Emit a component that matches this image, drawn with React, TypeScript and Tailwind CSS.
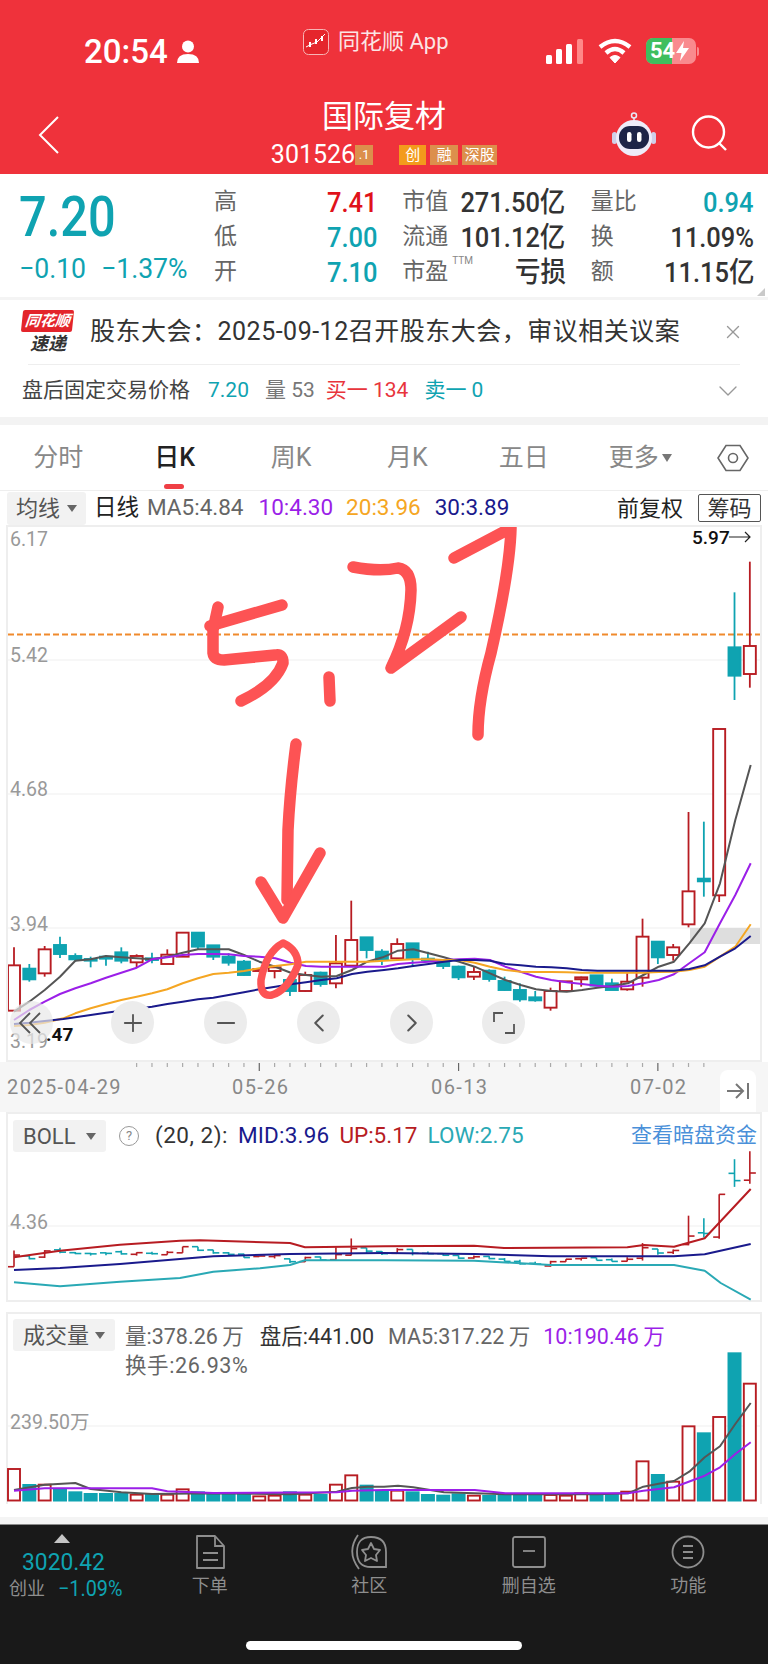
import { ChevronDown, ChevronLeft, ChevronRight, Minus, Plus, X } from "lucide-react"

const RED = "#b71c22"
const TEAL = "#0fa3b1"

// kind, wick top, wick bottom, body top, body bottom: measured in 3x crop units, y = 820 + v / 3
const candles: [string, number, number, number, number][] = [
  ["r", 382, 572, 436, 572], ["t", 432, 485, 446, 478], ["r", 378, 470, 388, 460], ["t", 350, 414, 375, 402],
  ["t", 400, 425, 408, 418], ["t", 410, 442, 417, 422], ["t", 405, 437, 410, 416], ["t", 382, 430, 397, 422],
  ["r", 403, 442, 408, 427], ["t", 398, 430, 415, 420], ["r", 388, 432, 404, 432], ["r", 338, 410, 338, 410],
  ["t", 338, 388, 338, 380], ["t", 375, 420, 376, 410], ["t", 400, 437, 410, 428], ["t", 420, 467, 425, 465],
  ["r", 447, 453, 447, 453], ["r", 435, 475, 442, 453], ["t", 478, 528, 480, 513], ["r", 455, 515, 465, 513],
  ["t", 455, 500, 458, 492], ["r", 345, 505, 430, 490], ["r", 242, 440, 360, 437], ["t", 352, 415, 352, 390],
  ["t", 388, 435, 395, 420], ["r", 355, 418, 372, 415], ["t", 370, 440, 370, 415], ["t", 395, 420, 416, 420],
  ["t", 420, 447, 420, 438], ["t", 437, 480, 440, 472], ["r", 440, 480, 456, 470], ["t", 448, 485, 452, 477],
  ["t", 470, 512, 483, 510], ["t", 490, 545, 510, 538], ["t", 513, 545, 532, 541], ["r", 503, 572, 513, 563],
  ["r", 484, 513, 484, 513], ["r", 470, 500, 472, 478], ["t", 466, 497, 466, 497], ["t", 476, 510, 490, 510],
  ["r", 460, 512, 485, 508], ["r", 296, 500, 350, 473], ["t", 365, 432, 365, 412], ["r", 372, 422, 382, 405],
  ["r", -24, 322, 214, 313], ["t", 5, 230, 176, 184], ["r", -273, 246, -273, 226], ["t", -683, -360, -518, -433],
  ["r", -775, -397, -522, -438],
]

const ma5 = "42,575 88,545 134,510 180,470 226,422 272,418 318,408 364,412 410,415 456,418 502,410 548,398 594,388 640,388 686,388 732,405 778,425 826,440 872,458 918,465 964,470 1010,468 1056,450 1102,425 1148,412 1194,392 1240,388 1286,400 1332,412 1378,425 1424,440 1470,460 1516,480 1562,495 1608,508 1654,513 1700,515 1746,510 1792,503 1838,498 1884,490 1930,465 1976,440 2022,425 2068,370 2114,310 2160,190 2206,0 2252,-165"
const ma10 = "42,600 88,570 134,545 180,522 226,505 272,490 318,473 364,458 410,443 456,418 502,412 548,405 594,402 640,402 686,403 732,408 778,410 826,415 872,428 918,438 964,440 1010,440 1056,440 1102,440 1152,440 1194,432 1240,428 1286,425 1332,420 1378,418 1424,416 1470,420 1516,440 1562,455 1608,470 1654,480 1700,487 1746,492 1792,497 1838,500 1884,498 1930,490 1976,480 2022,463 2068,430 2114,397 2160,310 2206,225 2252,130"
const ma20 = "42,618 88,615 134,608 190,595 226,580 272,565 318,552 364,540 410,530 456,520 502,508 548,490 594,475 640,462 686,458 732,453 778,445 826,438 872,433 918,425 964,425 1010,425 1056,425 1102,425 1152,422 1194,420 1240,418 1286,418 1332,420 1378,420 1424,428 1470,440 1516,450 1562,455 1608,456 1654,456 1700,457 1746,458 1792,458 1838,458 1884,458 1930,458 1976,456 2022,455 2068,450 2114,440 2160,410 2206,380 2252,313"
const ma30 = "42,612 88,608 134,603 190,597 226,592 272,585 318,578 364,572 410,566 456,560 502,552 548,545 594,538 640,533 686,525 732,517 778,508 826,500 872,493 918,487 964,480 1010,475 1056,462 1102,455 1152,450 1194,445 1240,438 1286,432 1332,425 1378,420 1424,420 1470,422 1516,432 1562,436 1608,440 1654,442 1700,445 1746,450 1792,452 1838,452 1884,452 1930,452 1976,452 2022,452 2068,447 2114,436 2160,410 2206,385 2252,348"

const bollUp = "42,475 180,455 360,437 540,425 600,424 870,432 915,445 1152,442 1422,440 1512,447 1882,445 1932,438 2022,443 2114,418 2252,270"
const bollMid = "42,513 180,507 360,495 540,480 640,472 870,465 1152,462 1422,465 1652,472 2022,472 2114,466 2252,435"
const bollLow = "42,550 180,562 360,548 540,537 640,518 780,508 870,498 915,484 1152,484 1422,485 1652,498 2022,498 2114,515 2162,552 2252,602"

const volTops = [480, 525, 527, 537, 547, 552, 552, 552, 557, 555, 557, 541, 547, 552, 555, 555, 562, 560, 547, 557, 555, 527, 499, 527, 545, 545, 547, 555, 557, 553, 560, 558, 558, 558, 558, 558, 560, 553, 552, 552, 548, 457, 495, 518, 352, 370, 324, 130, 224]
const volMa5 = "42,543 134,527 226,522 272,540 364,550 456,555 640,553 870,556 1010,548 1056,537 1102,533 1152,533 1194,530 1240,535 1332,550 1424,553 1516,556 1792,556 1884,553 1930,533 1976,524 2022,516 2068,488 2114,445 2160,412 2206,345 2252,282"
const volMa10 = "42,545 134,538 456,538 502,547 640,552 1010,550 1056,545 1152,543 1424,543 1516,553 1884,553 1930,545 2022,535 2114,500 2160,475 2206,435 2252,400"

const candleX = (i: number) => 14 + 15.33 * i
const mainY = (v: number) => 820 + v / 3

// crop units to page px
const pts = (s: string, y0: number) =>
  s.split(" ").map((p) => {
    const [x, y] = p.split(",").map(Number)
    return `${(x / 3).toFixed(1)},${(y0 + y / 3).toFixed(1)}`
  }).join(" ")

const bollY = (y: number) => 1238 + (y - 895) * 0.257

function Line({ points, color, width = 2 }: { points: string; color: string; width?: number }) {
  return <polyline points={points} fill="none" stroke={color} strokeWidth={width} strokeLinejoin="round" />
}

function MainChart() {
  return (
    <svg viewBox="8 527 752 533" width={752} height={533} className="block" fontFamily="Roboto, sans-serif">
      <line x1="8" x2="760" y1="660" y2="660" stroke="#efefef" />
      <line x1="8" x2="760" y1="794" y2="794" stroke="#efefef" />
      <line x1="8" x2="760" y1="928" y2="928" stroke="#efefef" />
      <rect x="690" y="928" width="70" height="16" fill="#dedede" />
      <line x1="8" x2="760" y1="634.5" y2="634.5" stroke="#f08a2c" strokeWidth="1.8" strokeDasharray="6 3" />
      <text x="10" y="546" fontSize="19.5" fill="#999">6.17</text>
      <text x="10" y="662" fontSize="19.5" fill="#999">5.42</text>
      <text x="10" y="796" fontSize="19.5" fill="#999">4.68</text>
      <text x="10" y="931" fontSize="19.5" fill="#999">3.94</text>
      <text x="10" y="1048" fontSize="19.5" fill="#999">3.19</text>
      <text x="692" y="544" fontSize="19" fontWeight="500" fill="#111">5.97</text>
      <path d="M729 537 H750 M745 532 L750 537 L745 542" fill="none" stroke="#222" strokeWidth="1.2" />
      {candles.map(([k, wt, wb, bt, bb], i) => {
        const c = k === "r" ? RED : TEAL
        const x = candleX(i)
        return (
          <g key={i}>
            <line x1={x} x2={x} y1={mainY(wt)} y2={mainY(wb)} stroke={c} strokeWidth="1.8" />
            <rect
              x={x - 6}
              y={mainY(bt)}
              width={12}
              height={Math.max(mainY(bb) - mainY(bt), 1.5)}
              fill={k === "r" ? "#fff" : c}
              stroke={c}
              strokeWidth="1.9"
            />
          </g>
        )
      })}
      <Line points={pts(ma5, 820)} color="#555" />
      <Line points={pts(ma10, 820)} color="#9b1fe8" />
      <Line points={pts(ma20, 820)} color="#f5a623" />
      <Line points={pts(ma30, 820)} color="#1a1a8c" />
      {/* hand written note on top of the chart */}
      <g fill="none" stroke="#fd5354" strokeWidth="11.5" strokeLinecap="round" strokeLinejoin="round">
        <path d="M282 605 L220 623 L210 626" />
        <path d="M218 607 L213 630 L213 653 Q214 660 224 660 L275 655 Q283 653 283 663 Q275 685 241 701" />
        <path d="M329 677 L330 701" />
        <path d="M296 744 Q290 790 288 830 L287 900" />
        <path d="M261 882 L283 918 L320 853" />
        <path d="M283 943 Q266 952 261 980 Q260 997 272 995 Q288 990 298 965 Q298 950 283 943 Z" strokeWidth="7.5" />
        <path d="M353 567 Q380 572 398 568 Q411 570 411 590 Q410 630 391 668 L461 617" />
        <path d="M454 558 L511 528 Q510 570 491 653 Q478 700 478 735" />
      </g>
    </svg>
  )
}

function BollChart() {
  return (
    <svg viewBox="8 1159 752 140" width={752} height={140} className="block overflow-visible" fontFamily="Roboto, sans-serif">
      <line x1="8" x2="760" y1="1227" y2="1227" stroke="#efefef" />
      <text x="10" y="1230" fontSize="19.5" fill="#999">4.36</text>
      {candles.map(([k, wt, wb, bt, bb], i) => {
        const c = k === "r" ? RED : TEAL
        const x = candleX(i)
        const top = bollY(mainY(bt))
        const bot = bollY(mainY(bb))
        const open = k === "r" ? bot : top
        const close = k === "r" ? top : bot
        return (
          <g key={i} stroke={c} strokeWidth="1.6">
            <line x1={x} x2={x} y1={bollY(mainY(wt))} y2={bollY(mainY(wb))} />
            <line x1={x - 6} x2={x} y1={open} y2={open} />
            <line x1={x} x2={x + 6} y1={close} y2={close} />
          </g>
        )
      })}
      <Line points={pts(bollUp, 1100)} color={RED} />
      <Line points={pts(bollMid, 1100)} color="#1a1a8c" />
      <Line points={pts(bollLow, 1100)} color="#2aa9b5" />
    </svg>
  )
}

function VolChart() {
  return (
    <svg viewBox="8 1395 752 108" width={752} height={108} className="block overflow-visible" fontFamily="Roboto, 'Noto Sans CJK SC', sans-serif">
      <line x1="8" x2="760" y1="1427" y2="1427" stroke="#efefef" />
      <text x="10" y="1430" fontSize="19.5" fill="#999">239.50万</text>
      {volTops.map((t, i) => {
        const y = 1310 + t / 3
        const up = candles[i][0] === "r"
        return up ? (
          <rect key={i} x={candleX(i) - 6} y={y} width={12} height={1501.5 - y} fill="#fff" stroke={RED} strokeWidth="1.9" />
        ) : (
          <rect key={i} x={candleX(i) - 7} y={y} width={14} height={1502.5 - y} fill={TEAL} />
        )
      })}
      <Line points={pts(volMa5, 1310)} color="#555" />
      <Line points={pts(volMa10, 1310)} color="#9b1fe8" />
    </svg>
  )
}

function Narrow({ children, className = "" }: { children: React.ReactNode; className?: string }) {
  return <span className={`inline-block origin-right scale-x-[0.91] whitespace-nowrap ${className}`}>{children}</span>
}

function Cell({ label, value, color, sup }: { label: string; value: string; color: string; sup?: boolean }) {
  return (
    <div className="flex h-[35px] items-center justify-between">
      <span className="relative text-[23px] text-[#666]">
        {label}
        {sup && <span className="absolute left-[50px] top-[-2px] text-[10px] text-[#888]">TTM</span>}
      </span>
      <Narrow className={`text-[28px] font-medium ${color}`}>{value}</Narrow>
    </div>
  )
}

function RoundButton({ children, left, faded }: { children: React.ReactNode; left: string; faded?: boolean }) {
  return (
    <div className={`absolute top-[474px] flex h-[43px] w-[43px] items-center justify-center rounded-full ${left} ${faded ? "bg-[#e8e8e8]/70" : "bg-[#ececec]"}`}>
      {children}
    </div>
  )
}

function Chip({ label, width }: { label: string; width: string }) {
  return (
    <div className={`flex h-[32px] items-center justify-between rounded-[3px] bg-[#f2f2f2] px-[10px] text-[22px] text-[#555] ${width}`}>
      {label}
      <span className="h-0 w-0 border-x-[5px] border-t-[7px] border-x-transparent border-t-[#666]" />
    </div>
  )
}

function NavItem({ label, children }: { label: string; children: React.ReactNode }) {
  return (
    <div className="flex flex-col items-center">
      <div className="flex h-[36px] items-center justify-center">{children}</div>
      <span className="mt-[3px] text-[18px] leading-[26px] text-[#8e8e8e]">{label}</span>
    </div>
  )
}

export default function App() {
  return (
    <div className="h-[1665px] w-[768px] overflow-hidden bg-white font-['Roboto','Noto_Sans_CJK_SC',sans-serif]">
      <header className="h-[174px] bg-[#ef323b] text-white">
        <div className="flex h-[84px] pt-[38px]">
          <div className="ml-[84px] flex h-[28px] w-[219px] items-center gap-[9px]">
            <span className="text-[33px] font-medium leading-[28px]">20:54</span>
            <svg width="22" height="24" viewBox="0 0 22 24" fill="#fff">
              <circle cx="11" cy="6.5" r="6" />
              <path d="M0 23 Q0 14 11 14 Q22 14 22 23 Z" />
            </svg>
          </div>
          <div className="-mt-[9px] flex h-[26px] w-[242px] items-center gap-[9px]">
            <svg width="26" height="26" viewBox="0 0 26 26">
              <rect x="0.5" y="0.5" width="25" height="25" rx="5" fill="#e5262c" stroke="#f7b5b5" />
              <path d="M3 18 L9 15 L14 13 L22 5" fill="none" stroke="#fff" strokeWidth="1" />
              <rect x="6" y="13" width="2" height="5" fill="#fff" />
              <rect x="12" y="10" width="2" height="5" fill="#fff" />
              <rect x="18" y="7" width="2" height="5" fill="#fff" />
            </svg>
            <span className="text-[22px] leading-[26px] text-[#fbe5e5]">同花顺 App</span>
          </div>
          <div className="flex h-[26px] items-center">
            <svg width="40" height="26" viewBox="0 0 40 26" fill="#fff">
              <rect x="1" y="17" width="6" height="9" rx="1.5" />
              <rect x="11" y="11" width="6" height="15" rx="1.5" />
              <rect x="21" y="6" width="6" height="20" rx="1.5" />
              <rect x="32" y="1" width="6" height="25" rx="1.5" fill="#f88" />
            </svg>
            <svg className="ml-[13px]" width="34" height="26" viewBox="0 0 34 26" fill="none" stroke="#fff" strokeWidth="4.4">
              <path d="M2 9 Q17 -3 32 9" />
              <path d="M8 15 Q17 7 26 15" />
              <path d="M17 25 L12 19.5 Q17 15.5 22 19.5 Z" fill="#fff" strokeWidth="1" />
            </svg>
            <div className="relative ml-[14px] flex h-[26px] w-[50px] items-center overflow-hidden rounded-[7px] bg-[#f98a8e] text-[22px] font-bold leading-none">
              <div className="absolute inset-y-0 left-0 w-[26px] bg-[#3fbe5e]" />
              <span className="relative pl-[4px]">54</span>
              <svg className="relative ml-[1px]" width="13" height="20" viewBox="0 0 13 20" fill="#fff">
                <path d="M8 0 L0 12 L5.5 12 L4 20 L13 7 L7 7 Z" />
              </svg>
            </div>
            <span className="ml-[1px] h-[9px] w-[2px] rounded-r-full bg-[#f98a8e]" />
          </div>
        </div>
        <div className="grid h-[90px] grid-cols-[1fr_auto_1fr]">
          <div className="pl-[38px] pt-[32px]">
            <svg width="22" height="38" viewBox="0 0 22 38" fill="none" stroke="#fff" strokeWidth="2">
              <path d="M20 1 L2 19 L20 37" />
            </svg>
          </div>
          <div className="flex flex-col items-center">
            <span className="mt-[15px] text-[31px] leading-[36px]">国际复材</span>
            <div className="mt-[9px] flex h-[22px] items-center">
              <span className="text-[25px] leading-[22px]">301526</span>
              <span className="flex h-[20px] w-[18px] items-center justify-center bg-[#dc8f4c] text-[13px]">.1</span>
              <span className="ml-[26px] flex h-[20px] w-[27px] items-center justify-center bg-[#f39b1c] text-[15px]">创</span>
              <span className="ml-[4px] flex h-[20px] w-[28px] items-center justify-center bg-[#dc8f4c] text-[15px]">融</span>
              <span className="ml-[4px] flex h-[20px] w-[35px] items-center justify-center bg-[#dc8f4c] text-[15px]">深股</span>
            </div>
          </div>
          <div className="flex justify-end pr-[39px] pt-[28px]">
            <svg width="44" height="44" viewBox="0 0 44 44">
              <circle cx="22" cy="3.5" r="2.5" fill="none" stroke="#e8e8f8" strokeWidth="1.5" />
              <path d="M22 6 V10" stroke="#e8e8f8" strokeWidth="1.5" />
              <rect x="0" y="20" width="5" height="12" rx="2.5" fill="#cfcfe8" />
              <rect x="39" y="20" width="5" height="12" rx="2.5" fill="#cfcfe8" />
              <circle cx="22" cy="26" r="18" fill="#eeecf9" />
              <rect x="7" y="14" width="30" height="23" rx="11" fill="#1d2447" />
              <rect x="15" y="20" width="4.5" height="10" rx="2.2" fill="#fff" />
              <rect x="25" y="20" width="4.5" height="10" rx="2.2" fill="#fff" />
            </svg>
            <svg className="ml-[35px] mt-[2px]" width="38" height="38" viewBox="0 0 38 38" fill="none" stroke="#fff" strokeWidth="2.4">
              <circle cx="17.5" cy="18" r="15.5" />
              <path d="M28 29 L35 36" />
            </svg>
          </div>
        </div>
      </header>

      <section className="relative flex h-[123px] bg-white">
        <div className="w-[214px] pl-[19px]">
          <div className="mt-[17px] h-[52px] text-[56px] font-medium leading-[52px] text-[#0fa3b1]">
            <span className="inline-block origin-left scale-x-[0.87]">7.20</span>
          </div>
          <div className="mt-[10px] flex text-[28px] leading-[32px] text-[#0fa3b1]">
            <span className="inline-block w-[82px] origin-left scale-x-[0.95] whitespace-nowrap">−0.10</span>
            <span className="inline-block origin-left scale-x-[0.95] whitespace-nowrap">−1.37%</span>
          </div>
        </div>
        <div className="grid w-[540px] grid-cols-3 gap-x-[25px] pt-[11px]">
          <div>
            <Cell label="高" value="7.41" color="text-[#e0121a]" />
            <Cell label="低" value="7.00" color="text-[#0fa3b1]" />
            <Cell label="开" value="7.10" color="text-[#0fa3b1]" />
          </div>
          <div>
            <Cell label="市值" value="271.50亿" color="text-[#333]" />
            <Cell label="流通" value="101.12亿" color="text-[#333]" />
            <Cell label="市盈" value="亏损" color="text-[#333]" sup />
          </div>
          <div>
            <Cell label="量比" value="0.94" color="text-[#0fa3b1]" />
            <Cell label="换" value="11.09%" color="text-[#333]" />
            <Cell label="额" value="11.15亿" color="text-[#333]" />
          </div>
        </div>
        <span className="absolute bottom-[1px] right-[3px] h-0 w-0 border-b-[8px] border-l-[8px] border-b-[#c9c9c9] border-l-transparent" />
      </section>
      <div className="h-[3px] bg-[#f4f4f4]" />

      <section className="flex h-[64px] items-center pl-[22px] pr-[24px]">
        <div className="flex w-[52px] flex-col items-center">
          <span className="-skew-x-6 rounded-[2px] bg-[#e3242b] px-[3px] text-[15px] font-bold italic leading-[22px] text-white">同花顺</span>
          <span className="mt-[1px] text-[18px] font-bold italic leading-[21px] text-[#333]">速递</span>
        </div>
        <span className="ml-[16px] flex-1 whitespace-nowrap text-[25px] tracking-[0.5px] text-[#333]">股东大会：2025-09-12召开股东大会，审议相关议案</span>
        <X size={22} strokeWidth={1.5} className="text-[#999]" />
      </section>
      <div className="mx-[28px] h-px bg-[#eeeeee]" />
      <section className="flex h-[52px] items-center pl-[22px] pr-[24px] text-[21px]">
        <span className="text-[#444]">盘后固定交易价格</span>
        <span className="ml-[18px] text-[#0fa3b1]">7.20</span>
        <span className="ml-[16px] text-[#777]">量 53</span>
        <span className="ml-[11px] text-[#e8353c]">买一 134</span>
        <span className="ml-[16px] text-[#0fa3b1]">卖一 0</span>
        <ChevronDown size={32} strokeWidth={1} className="ml-auto text-[#999]" />
      </section>
      <div className="h-[8px] bg-[#f3f3f3]" />

      <nav className="grid h-[65px] grid-cols-[repeat(6,116.4px)_1fr] items-center text-[25px] text-[#888]">
        <span className="text-center">分时</span>
        <span className="relative h-[36px] text-center font-medium leading-[36px] text-[#222]">
          日K
          <span className="absolute bottom-[-13px] left-[48px] h-[5px] w-[20px] rounded-full bg-[#ef3f45]" />
        </span>
        <span className="text-center">周K</span>
        <span className="text-center">月K</span>
        <span className="text-center">五日</span>
        <span className="flex items-center justify-center gap-[3px]">
          更多
          <span className="h-0 w-0 border-x-[5px] border-t-[8px] border-x-transparent border-t-[#777]" />
        </span>
        <span className="flex justify-center">
          <svg width="32" height="28" viewBox="0 0 32 28" fill="none" stroke="#666" strokeWidth="1.6">
            <path d="M9 1.5 H23 L31 14 L23 26.5 H9 L1 14 Z" />
            <circle cx="16" cy="14" r="4.5" />
          </svg>
        </span>
      </nav>
      <div className="h-px bg-[#eeeeee]" />

      <div className="flex h-[34px] items-center pl-[7px] pr-[7px] text-[22.5px]">
        <div className="flex h-[33px] w-[79px] items-center justify-between rounded-[3px] bg-[#f2f2f2] px-[9px] text-[22px] text-[#555]">
          均线
          <span className="h-0 w-0 border-x-[5px] border-t-[7px] border-x-transparent border-t-[#666]" />
        </div>
        <span className="ml-[8px] text-[#222]">日线</span>
        <span className="ml-[8px] text-[#666]">MA5:4.84</span>
        <span className="ml-[15px] text-[#9b1fe8]">10:4.30</span>
        <span className="ml-[13px] text-[#f5a623]">20:3.96</span>
        <span className="ml-[14px] text-[#1a1a8c]">30:3.89</span>
        <span className="ml-auto text-[22px] text-[#222]">前复权</span>
        <span className="ml-[15px] flex h-[28px] w-[63px] items-center justify-center rounded-[2px] border border-[#555] text-[22px] text-[#333]">筹码</span>
      </div>

      <div className="relative mx-[6px] h-[537px] w-[756px] border-2 border-[#eeeeee]">
        <MainChart />
        <span className="absolute left-[38px] top-[497px] text-[19px] font-bold leading-[22px] text-[#111]">.47</span>
        <RoundButton left="left-[2px]" faded>
          <svg width="28" height="24" viewBox="0 0 28 24" fill="none" stroke="#555" strokeWidth="1.8">
            <path d="M12 2 L2 12 L12 22" />
            <path d="M22 2 L12 12 L22 22" />
          </svg>
        </RoundButton>
        <RoundButton left="left-[103px]">
          <Plus size={28} strokeWidth={1.6} className="text-[#555]" />
        </RoundButton>
        <RoundButton left="left-[196px]">
          <Minus size={28} strokeWidth={1.6} className="text-[#555]" />
        </RoundButton>
        <RoundButton left="left-[289px]">
          <ChevronLeft size={30} strokeWidth={1.6} className="text-[#555]" />
        </RoundButton>
        <RoundButton left="left-[382px]">
          <ChevronRight size={30} strokeWidth={1.6} className="text-[#555]" />
        </RoundButton>
        <RoundButton left="left-[474px]">
          <svg width="24" height="24" viewBox="0 0 24 24" fill="none" stroke="#555" strokeWidth="1.8">
            <path d="M2 11 V2 H11" />
            <path d="M22 13 V22 H13" />
          </svg>
        </RoundButton>
      </div>

      <div className="relative h-[50px] bg-[#f6f6f6]">
        <svg width="768" height="10" className="block">
          {candles.map((_, i) => {
            const x = candleX(i)
            if (x < 130 || x > 710) return null
            const major = i === 16 || i === 29 || i === 42
            return <line key={i} x1={x} x2={x} y1="1" y2={major ? 9 : 5} stroke={major ? "#666" : "#aaa"} strokeWidth="1.2" />
          })}
        </svg>
        <div className="relative h-[30px] text-[20px] leading-[30px] tracking-[1.4px] text-[#888]">
          <span className="absolute left-[7px]">2025-04-29</span>
          <span className="absolute left-[232px]">05-26</span>
          <span className="absolute left-[431px]">06-13</span>
          <span className="absolute left-[630px]">07-02</span>
        </div>
        <div className="absolute right-[12px] top-[8px] flex h-[42px] w-[36px] items-center justify-center rounded-t-[8px] bg-white">
          <svg width="24" height="20" viewBox="0 0 24 20" fill="none" stroke="#777" strokeWidth="2">
            <path d="M1 10 H17" />
            <path d="M10 3 L17 10 L10 17" />
            <path d="M22 2 V18" />
          </svg>
        </div>
      </div>

      <div className="mx-[6px] h-[190px] w-[756px] border-2 border-[#eeeeee]">
        <div className="flex h-[44px] items-center pl-[5px] pr-[3px] text-[22.5px]">
          <Chip label="BOLL" width="w-[93px]" />
          <span className="ml-[13px] flex h-[20px] w-[20px] items-center justify-center rounded-full border border-[#999] text-[13px] text-[#888]">?</span>
          <span className="ml-[16px] tracking-[0.5px] text-[#333]">(20, 2):</span>
          <span className="ml-[10px] tracking-[0.2px] text-[#1a1a8c]">MID:3.96</span>
          <span className="ml-[10px] text-[#b71c22]">UP:5.17</span>
          <span className="ml-[10px] text-[#2aa9b5]">LOW:2.75</span>
          <span className="ml-auto text-[21px] text-[#4a90d9]">查看暗盘资金</span>
        </div>
        <BollChart />
      </div>
      <div className="h-[10px]" />

      <div className="relative mx-[6px] h-[192px] w-[756px] border-x-2 border-t-2 border-[#eeeeee]">
        <div className="flex h-[80px] pl-[5px] pt-[5px] text-[21.5px] leading-[29px]">
          <Chip label="成交量" width="w-[102px]" />
          <div className="ml-[10px] mt-[3px] text-[#666]">
            <div className="flex">
              <span className="text-[#666]">量:378.26{"\u2009"}万</span>
              <span className="ml-[16px] text-[#333]">盘后:441.00</span>
              <span className="ml-[14px] text-[#666]">MA5:317.22{"\u2009"}万</span>
              <span className="ml-[13px] text-[#9b1fe8]">10:190.46{"\u2009"}万</span>
            </div>
            <div className="tracking-[0.6px]">换手:26.93%</div>
          </div>
        </div>
        <VolChart />
      </div>

      <div className="h-[13px]" />
      <div className="h-[7px] bg-[#f4f4f4]" />

      <footer className="relative flex h-[140px] border-t border-[#8a8a8a] bg-[#191919]">
        <div className="relative w-[130px]">
          <span className="absolute left-[54px] top-[9px] h-0 w-0 border-x-[8px] border-b-[9px] border-x-transparent border-b-[#c4c4c4]" />
          <span className="absolute left-[22px] top-[24px] origin-left scale-x-[0.95] text-[24px] leading-[26px] text-[#0fa3b1]">3020.42</span>
          <span className="absolute left-[9px] top-[51px] text-[18px] leading-[26px] text-[#8e8e8e]">创业</span>
          <span className="absolute left-[58px] top-[51px] origin-left scale-x-[0.9] whitespace-nowrap text-[22px] leading-[26px] text-[#0fa3b1]">−1.09%</span>
        </div>
        <div className="grid flex-1 grid-cols-4 pt-[9px]">
          <NavItem label="下单">
            <svg width="32" height="36" viewBox="0 0 32 36" fill="none" stroke="#8e8e8e" strokeWidth="1.8">
              <path d="M3 2 H21 L30 12 V34 H3 Z" strokeLinejoin="round" />
              <path d="M21 2 V12 H30" />
              <path d="M9 19 H24 M9 26 H24" />
            </svg>
          </NavItem>
          <NavItem label="社区">
            <svg width="38" height="36" viewBox="0 0 38 36" fill="none" stroke="#8e8e8e" strokeWidth="1.8">
              <path d="M8 1 Q-4 18 9 35" />
              <path d="M21 3 Q36 3 36 18 V33 H21 Q7 33 7 18 Q7 3 21 3 Z" />
              <path d="M21 9 L24 15 L30 16 L26 21 L27 27 L21 24 L15 27 L16 21 L12 16 L18 15 Z" strokeLinejoin="round" />
            </svg>
          </NavItem>
          <NavItem label="删自选">
            <svg width="34" height="32" viewBox="0 0 34 32" fill="none" stroke="#8e8e8e" strokeWidth="1.8">
              <rect x="1" y="1" width="32" height="30" rx="2" />
              <path d="M11 15 H23" />
            </svg>
          </NavItem>
          <NavItem label="功能">
            <svg width="34" height="34" viewBox="0 0 34 34" fill="none" stroke="#8e8e8e" strokeWidth="1.8">
              <circle cx="17" cy="17" r="15.5" />
              <path d="M12 11 H22 M12 17 H22 M12 23 H22" />
            </svg>
          </NavItem>
        </div>
        <div className="absolute bottom-[14px] left-[246px] h-[9px] w-[276px] rounded-full bg-white" />
      </footer>
    </div>
  )
}
